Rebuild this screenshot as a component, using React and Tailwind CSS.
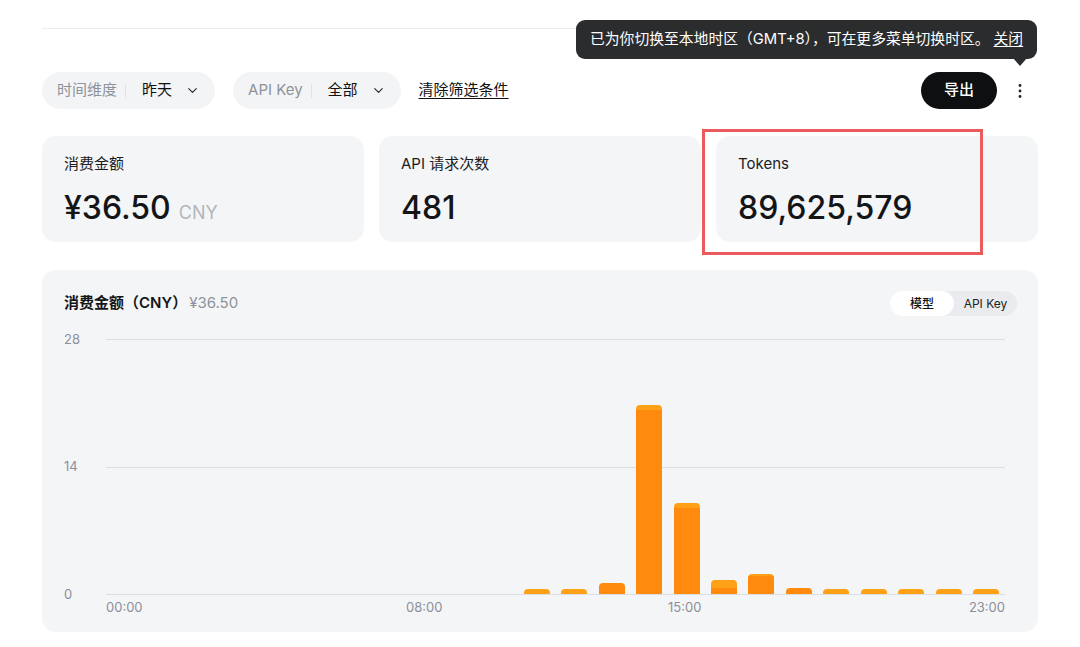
import { ChevronDown } from 'lucide-react';

const bars = [
  // [hour, lightPx, darkPx] stacked: light on top, dark below
  [11, 5, 0],
  [12, 5, 0],
  [13, 0, 11],
  [14, 5, 184],
  [15, 5, 86],
  [16, 8, 6],
  [17, 2, 18],
  [18, 0, 6],
  [19, 5, 0],
  [20, 5, 0],
  [21, 5, 0],
  [22, 5, 0],
  [23, 5, 0],
];

function FilterPill({ label, value }) {
  return (
    <div className="flex h-[37px] items-center rounded-full bg-[#f3f4f6] pl-[15px] pr-[15px]">
      <span className="text-[15px] text-[#8e939b]">{label}</span>
      <span className="mx-[8px] h-[14px] w-px bg-[#e1e3e6]" />
      <span className="ml-[8px] text-[15px] text-[#111]">{value}</span>
      <ChevronDown size={15} strokeWidth={1.75} className="ml-[13px] text-[#222]" />
    </div>
  );
}

function StatCard({ label, children, highlight }) {
  return (
    <div className="relative h-[106px] flex-1 rounded-[14px] bg-[#f4f5f7] pl-[22px] pt-[18px]">
      <div className="text-[15px] leading-[20px] text-[#1b1c1e]">{label}</div>
      <div className="mt-[16px] flex items-baseline leading-[36px]">{children}</div>
      {highlight && (
        <div className="pointer-events-none absolute left-[-14px] top-[-7px] h-[126px] w-[281px] border-[3px] border-[#ec5b5b]" />
      )}
    </div>
  );
}

export default function App() {
  const slots = Array.from({ length: 24 }, (_, i) => bars.find((b) => b[0] === i));

  return (
    <div
      className="relative h-[647px] w-[1080px] overflow-hidden bg-white px-[42px] pt-[28px]"
      style={{ fontFamily: 'Inter, "Noto Sans CJK SC", sans-serif' }}
    >
      <div className="h-px w-full bg-[#ececee]" />

      {/* tooltip */}
      <div className="absolute right-[43px] top-[20px] flex h-[39px] w-[461px] items-center whitespace-nowrap rounded-[9px] bg-[#2b2c2e] pl-[14px] text-[14.8px] text-white">
        <span>已为你切换至本地时区（GMT+8），可在更多菜单切换时区。</span>
        <span className="ml-[4px] underline underline-offset-2">关闭</span>
        <span className="absolute right-[10px] top-[38px] h-0 w-0 border-x-[7px] border-t-[8px] border-x-transparent border-t-[#2b2c2e]" />
      </div>

      {/* filter row */}
      <div className="mt-[43px] flex items-center">
        <FilterPill label="时间维度" value="昨天" />
        <div className="ml-[18px]">
          <FilterPill label="API Key" value="全部" />
        </div>
        <button className="ml-[18px] text-[15px] text-[#111] underline underline-offset-[3px]">清除筛选条件</button>
        <div className="ml-auto flex items-center">
          <button className="flex h-[37px] w-[76px] items-center justify-center rounded-full bg-[#0e0f11] text-[15px] font-medium text-white">
            导出
          </button>
          <svg width="16" height="16" viewBox="0 0 16 16" className="ml-[15px] mr-[10px]">
            <circle cx="8" cy="2.5" r="1.4" fill="#222" />
            <circle cx="8" cy="8" r="1.4" fill="#222" />
            <circle cx="8" cy="13.5" r="1.4" fill="#222" />
          </svg>
        </div>
      </div>

      {/* stat cards */}
      <div className="mt-[27px] flex gap-[15px]">
        <StatCard label="消费金额">
          <span className="text-[32px] font-medium text-[#141517]">¥36.50</span>
          <span className="ml-[8px] text-[18px] text-[#b3b6bb]">CNY</span>
        </StatCard>
        <StatCard label="API 请求次数">
          <span className="text-[32px] font-medium text-[#141517]">481</span>
        </StatCard>
        <StatCard label="Tokens" highlight>
          <span className="text-[32px] font-medium text-[#141517]">89,625,579</span>
        </StatCard>
      </div>

      {/* chart card */}
      <div className="mt-[28px] h-[362px] rounded-[14px] bg-[#f4f5f7] pl-[22px] pr-[21px] pt-[21px]">
        <div className="flex h-[25px] items-center">
          <span className="text-[15px] font-semibold text-[#141517]">消费金额（CNY）</span>
          <span className="ml-[2px] text-[15px] text-[#8e939b]">¥36.50</span>
          <div className="ml-auto flex h-[25px] items-center rounded-full bg-[#e9ebee] text-[12px]">
            <span className="flex h-[25px] w-[64px] items-center justify-center rounded-full bg-white font-medium text-[#111]">
              模型
            </span>
            <span className="flex h-[25px] w-[63px] items-center justify-center text-[#222]">API Key</span>
          </div>
        </div>

        <div className="mt-[23px] flex pr-[12px]">
          <div className="relative w-[42px] shrink-0 text-[13px] text-[#8b9099]">
            <span className="absolute left-0 top-[-9px] leading-[18px]">28</span>
            <span className="absolute left-0 top-[118px] leading-[18px]">14</span>
            <span className="absolute left-0 top-[246px] leading-[18px]">0</span>
          </div>
          <div className="flex-1">
            <div className="relative h-[256px] border-y border-[#dcdee2]">
              <div className="absolute left-0 right-0 top-[127px] h-px bg-[#dcdee2]" />
              <div className="relative flex h-full items-end">
                {slots.map((b, i) => (
                  <div key={i} className="flex flex-1 justify-center">
                    {b && (
                      <div className="flex w-[26px] flex-col overflow-hidden rounded-t-[4px]">
                        {b[1] > 0 && <div className="bg-[#ffa116]" style={{ height: b[1] }} />}
                        {b[2] > 0 && <div className="bg-[#ff8a0d]" style={{ height: b[2] }} />}
                      </div>
                    )}
                  </div>
                ))}
              </div>
            </div>
            <div className="mt-[3px] flex justify-between text-[13px] leading-[18px] text-[#8b9099]">
              <div className="flex flex-1">
                <span className="w-[300px]">00:00</span>
                <span className="w-[262px]">08:00</span>
                <span>15:00</span>
              </div>
              <span>23:00</span>
            </div>
          </div>
        </div>
      </div>
    </div>
  );
}
